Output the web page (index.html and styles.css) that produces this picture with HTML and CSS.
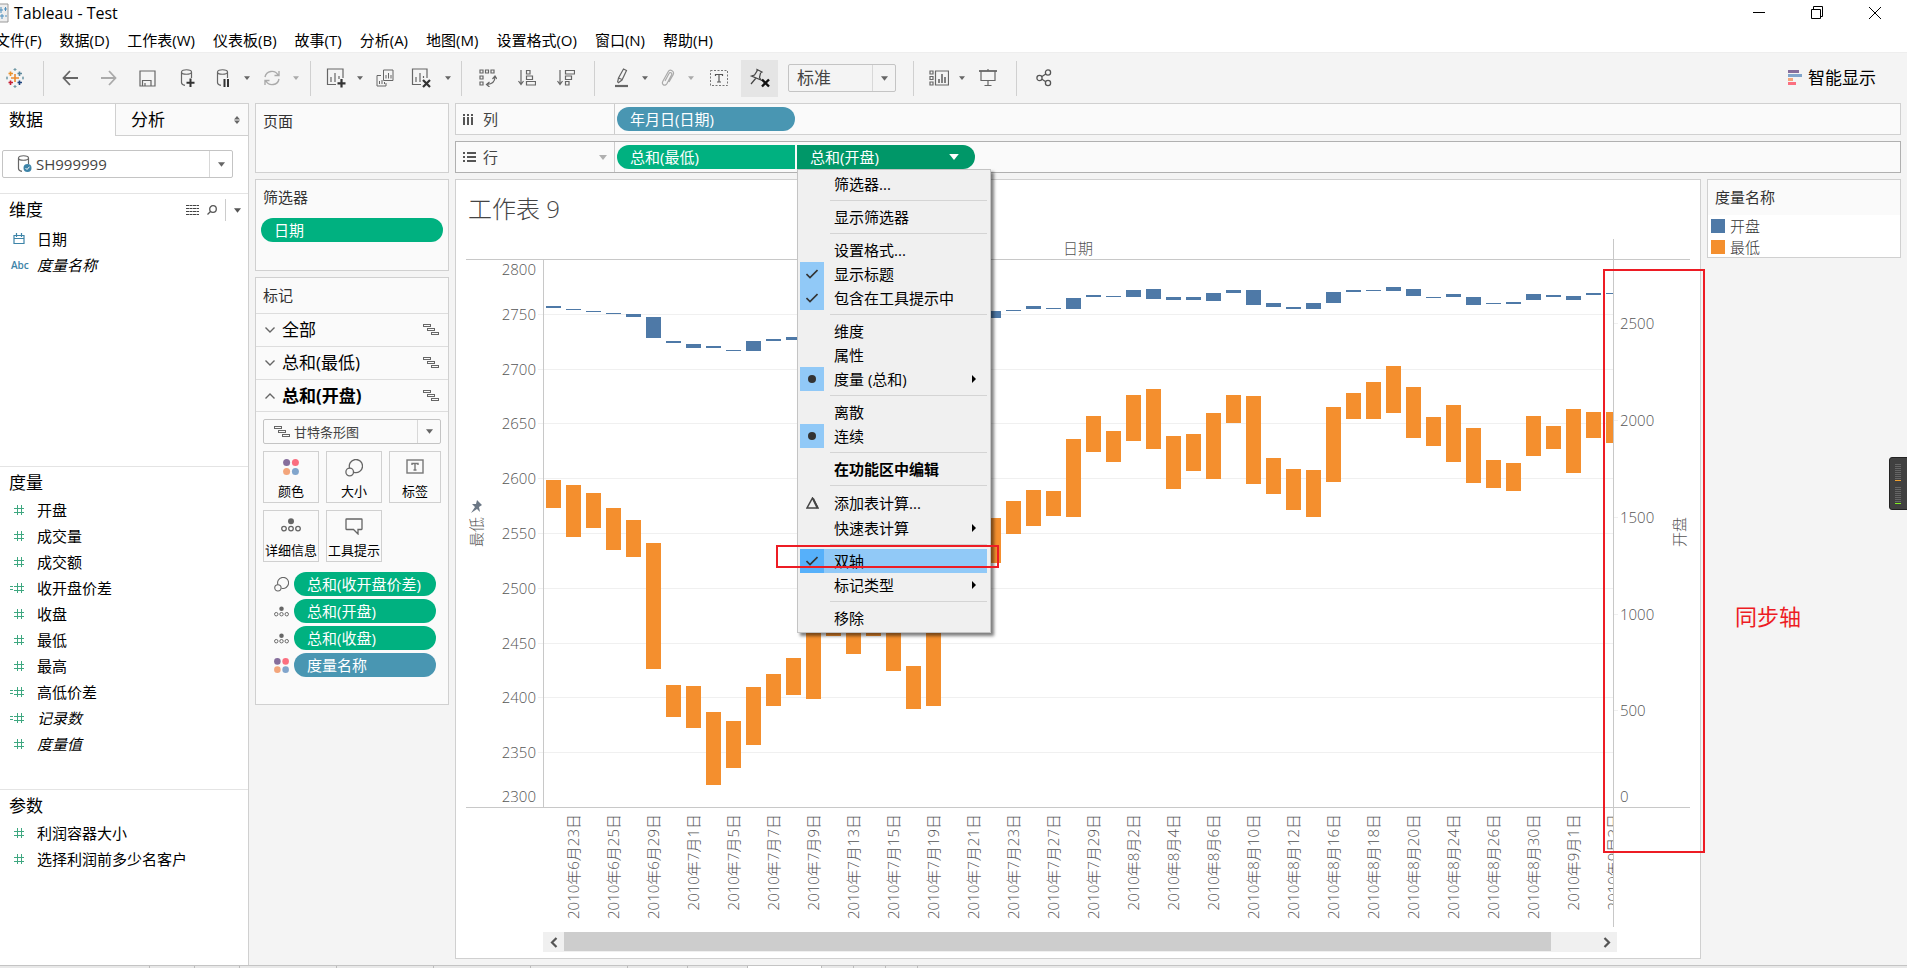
FILE: index.html
```html
<!DOCTYPE html>
<html lang="zh-CN">
<head>
<meta charset="utf-8">
<title>Tableau - Test</title>
<link rel="stylesheet" href="styles.css">
</head>
<body>
<svg class="defs" aria-hidden="true">
  <symbol id="caret" viewBox="0 0 8 5"><path d="M0 0H8L4 5Z" fill="currentColor"/></symbol>
  <symbol id="gantt" viewBox="0 0 16 12"><g fill="none" stroke="#666"><rect x=".5" y=".5" width="7" height="2"/><rect x="4.500" y="4.500" width="7" height="2"/><rect x="8.500" y="8.500" width="7" height="2"/></g></symbol>
  <symbol id="dots" viewBox="0 0 16 16"><circle cx="3.600" cy="3.600" r="3.500" fill="#866e9c"/><circle cx="12.400" cy="3.600" r="3.500" fill="#fb6f80"/><circle cx="3.600" cy="12.400" r="3.500" fill="#f3a57b"/><circle cx="12.400" cy="12.400" r="3.500" fill="#81a5cc"/></symbol>
  <symbol id="size" viewBox="0 0 18 18"><g fill="none" stroke="#666" stroke-width="1.300"><path d="M4.700 9.300A6.600 6.600 0 1 1 9 13.400"/><circle cx="4.700" cy="13" r="3.800"/></g></symbol>
  <symbol id="detail" viewBox="0 0 20 14"><circle cx="10" cy="3.200" r="3" fill="#666"/><g fill="none" stroke="#666" stroke-width="1.300"><circle cx="3" cy="10.600" r="2.300"/><circle cx="10" cy="10.600" r="2.300"/><circle cx="17" cy="10.600" r="2.300"/></g></symbol>
  <symbol id="hash" viewBox="0 0 16 12"><path d="M8.500 1V11M12.500 1V11M5 4.500H15M5 8.500H15" stroke="#3ea780" fill="none"/></symbol>
  <symbol id="calc" viewBox="0 0 16 12"><path d="M8.500 1V11M12.500 1V11M5 4.500H15M5 8.500H15M1 4.500H4M1 7.500H4" stroke="#3ea780" fill="none"/></symbol>
  <symbol id="check" viewBox="0 0 12 10"><path d="M.5 5L4 8.500L11.500 1" fill="none" stroke="#333" stroke-width="1.600"/></symbol>
  <symbol id="db" viewBox="0 0 16 20"><path d="M2.500 4V14.500C2.500 16 4 17 6 17.300M12.500 4V10M2.500 4C2.500 1 12.500 1 12.500 4S2.500 7 2.500 4" fill="none" stroke="#666" stroke-width="1.200"/></symbol>
</svg>

<header class="titlebar">
  <svg width="9" height="20" viewBox="0 0 9 20"><path d="M0 1H8V19H0" fill="#eee" stroke="#999"/><path d="M0 7H3M1 4V10M4 6H7M5.500 4V8M0 13H4M2 11V16M5 13H7" stroke="#4d8fbd" fill="none"/></svg>
  <span class="apptitle">Tableau - Test</span>
  <div class="wincontrols">
    <button aria-label="最小化"><svg width="12" height="12"><path d="M0 5.500H12" stroke="#000"/></svg></button>
    <button aria-label="还原"><svg width="12" height="13" fill="none" stroke="#000"><path d="M.5 3.500H9.500V12.500H.5ZM2.500 3V.5H11.500V10.500H10"/></svg></button>
    <button aria-label="关闭"><svg width="12" height="12"><path d="M0 0L12 12M12 0L0 12" stroke="#000"/></svg></button>
  </div>
</header>
<nav class="menubar">
  <button>文件(F)</button><button>数据(D)</button><button>工作表(W)</button><button>仪表板(B)</button><button>故事(T)</button><button>分析(A)</button><button>地图(M)</button><button>设置格式(O)</button><button>窗口(N)</button><button>帮助(H)</button>
</nav>

<div class="toolbar">
  <button class="b-29" aria-label="Tableau"><svg width="18" height="20" viewBox="0 0 18 20" fill="none" stroke-width="1.600"><path d="M9 6V14M5 10H13" stroke="#eb8a2f"/><path d="M4.500 3.500V8M2.500 5.500H7" stroke="#eb912c"/><path d="M13.500 3.500V8M11.500 5.500H16" stroke="#5b879b"/><path d="M4.500 12.500V17M2.500 14.500H7" stroke="#c72037"/><path d="M13.500 12.500V17M11.500 14.500H16" stroke="#1f447e"/><path d="M9 0V3M7.500 1.500H10.500M9 17V20M7.500 18.500H10.500M1 8.500V11.500M17 8.500V11.500M0 10H2M16 10H18" stroke="#7199a6" stroke-width="1.100"/></svg></button>
  <i class="sep s-logo"></i>
  <button class="b-39" aria-label="撤消"><svg width="16" height="16" fill="none" stroke="#666" stroke-width="1.800"><path d="M8 1L1.500 8L8 15M1.500 8H16"/></svg></button>
  <button class="b-39" aria-label="重做"><svg width="16" height="16" fill="none" stroke="#aaa" stroke-width="1.800"><path d="M8 1L14.500 8L8 15M14.500 8H0"/></svg></button>
  <button class="b-39" aria-label="保存"><svg width="17" height="17" fill="none" stroke="#666" stroke-width="1.200"><path d="M1 1H16V16H1ZM3.500 16V10.500H12V16M6 13V16"/></svg></button>
  <button class="b-39" aria-label="新建数据源"><svg width="16" height="20" viewBox="0 0 16 20"><use href="#db"/><path d="M11.500 10.500V19M7.500 14.700H15.500" stroke="#333" stroke-width="2"/></svg></button>
  <button class="b-33" aria-label="暂停自动更新"><svg width="16" height="20" viewBox="0 0 16 20"><use href="#db"/><path d="M9.500 11V19M13 11V19" stroke="#333" stroke-width="2"/></svg></button>
  <button class="b-16" aria-label="更多"><svg width="6" height="4"><use href="#caret"/></svg></button>
  <button class="b-33" aria-label="刷新"><svg width="18" height="18" fill="none" stroke="#aaa" stroke-width="1.400"><path d="M2 8A7 7 0 0 1 15 6M16 10A7 7 0 0 1 3 12M16 2V6.500H11.500M2 16V11.500H6.500"/></svg></button>
  <button class="b-16 dim" aria-label="更多"><svg width="6" height="4"><use href="#caret"/></svg></button>
  <i class="sep s-a"></i>
  <button class="b-33" aria-label="新建工作表"><svg width="20" height="20" fill="none" stroke="#666" stroke-width="1.200"><path d="M10 16.500H1.500V1H17V10M5 14V9M9 14V5M13 11V8" /><path d="M15.500 11V19.500M11.500 15.300H19.500" stroke="#333" stroke-width="2.200"/></svg></button>
  <button class="b-16" aria-label="更多"><svg width="6" height="4"><use href="#caret"/></svg></button>
  <button class="b-33" aria-label="复制"><svg width="18" height="18" fill="none" stroke="#666"><path d="M7.500 1H17V11.500H7.500ZM10 9.500V6M12.500 9.500V4M15 9.500V6M5 6.500H1V17H10V14M3.500 15V12M6 15V11M8.500 15V13"/></svg></button>
  <button class="b-39" aria-label="清除工作表"><svg width="20" height="20" fill="none" stroke="#666" stroke-width="1.200"><path d="M10 16.500H1.500V1H16V10M5 14V9M9 14V5M12.500 10V8"/><path d="M12 12L19 19M19 12L12 19" stroke="#333" stroke-width="2.200"/></svg></button>
  <button class="b-16" aria-label="更多"><svg width="6" height="4"><use href="#caret"/></svg></button>
  <i class="sep s-b"></i>
  <button class="b-39" aria-label="交换行和列"><svg width="18" height="18" fill="none" stroke="#666" stroke-width="1.200"><path d="M1 1H4V4H1ZM6.500 1H9.500V4H6.500ZM12 1H15V4H12ZM1 7H4V10H1ZM1 13H4V16H1ZM16 8C16 12 13 15 8 15.500M13.500 10L16 7L18 10M10.500 13L7.500 15.500L10.500 18"/></svg></button>
  <button class="b-39" aria-label="升序排序"><svg width="18" height="18" fill="none" stroke="#666" stroke-width="1.200"><path d="M3 1V15M.5 12L3 15.500L5.500 12M8.500 1.500H12V5H8.500ZM8.500 7H14.500V10.500H8.500ZM8.500 12.500H17.500V16H8.500Z"/></svg></button>
  <button class="b-39" aria-label="降序排序"><svg width="18" height="18" fill="none" stroke="#666" stroke-width="1.200"><path d="M3 1V15M.5 12L3 15.500L5.500 12M8.500 1.500H17.500V5H8.500ZM8.500 7H14.500V10.500H8.500ZM8.500 12.500H12V16H8.500Z"/></svg></button>
  <i class="sep s-c"></i>
  <button class="b-30" aria-label="突出显示"><svg width="14" height="20" fill="none" stroke="#666" stroke-width="1.200"><path d="M2.500 14.500L3.500 10L8.500 1L11.500 2.500L7 12L3 15M3.500 10L7 11.500"/><path d="M0 18H13" stroke-width="2.200"/></svg></button>
  <button class="b-16" aria-label="更多"><svg width="6" height="4"><use href="#caret"/></svg></button>
  <button class="b-30" aria-label="成员分组"><svg width="14" height="18" fill="none" stroke="#aaa" stroke-width="1.200"><path d="M4 12L8 4.500C9 2.500 11.500 4 10.500 6L6 14.500C4 18 0 15.500 2 12L7 3C9 -.5 14 2 12 6L8 13"/></svg></button>
  <button class="b-16 dim" aria-label="更多"><svg width="6" height="4"><use href="#caret"/></svg></button>
  <button class="b-39" aria-label="显示标记标签"><svg width="18" height="16" fill="none" stroke="#777"><rect x=".5" y=".5" width="17" height="15" stroke-dasharray="2 1.500"/><path d="M5.500 6V4.500H12.500V6M9 4.500V12M7 12H11" stroke="#555" stroke-width="1.200"/></svg></button>
  <button class="b-37 active" aria-label="固定"><svg width="22" height="20" fill="none" stroke="#444" stroke-width="1.200"><path d="M8 1.500L13 4L11.500 5L10.500 9.500L12 12L2.500 8L5.500 7L8 3ZM7 10L2 16"/><path d="M13 11.500L20 18.500M20 11.500L13 18.500" stroke="#111" stroke-width="2.400"/></svg></button>
  <span class="select fit"><select aria-label="适合"><option>标准</option></select><svg width="7" height="5"><use href="#caret"/></svg></span>
  <i class="sep s-d"></i>
  <button class="b-30" aria-label="显示/隐藏卡"><svg width="20" height="16" fill="none" stroke="#666" stroke-width="1.200"><path d="M1 1H4V4H1ZM1 6.500H4V9.500H1ZM1 12H4V15H1ZM6.500 1H19.500V15H6.500Z"/><path d="M10 13V9M13 13V4M16 13V7" stroke-width="1.600"/></svg></button>
  <button class="b-16" aria-label="更多"><svg width="6" height="4"><use href="#caret"/></svg></button>
  <button class="b-36" aria-label="演示模式"><svg width="18" height="18" fill="none" stroke="#666" stroke-width="1.200"><path d="M0 2H18" stroke-width="1.800"/><path d="M2 2V11.500H16V2M9 0V2M9 11.500V16.500M5.500 16.500H12.500"/></svg></button>
  <i class="sep s-e"></i>
  <button class="b-39" aria-label="共享"><svg width="16" height="18" fill="none" stroke="#555" stroke-width="1.300"><circle cx="3.500" cy="9" r="2.600"/><circle cx="12" cy="3.500" r="2.600"/><circle cx="12" cy="14" r="2.600"/><path d="M6 7.500L9.800 5M6 10.300L9.800 12.700"/></svg></button>
  <button class="showme"><svg width="14" height="17"><path d="M0 0H11V3H0Z" fill="#866e9c"/><path d="M0 4H14V7H0Z" fill="#81a5cc"/><path d="M0 8H5V11H0Z" fill="#f3a57b"/><path d="M0 12H8V15H0Z" fill="#fb6f80"/></svg>智能显示</button>
</div>

<main class="main">
  <aside class="datapane">
    <div class="tabs"><button class="tab on">数据</button><button class="tab">分析<svg width="6" height="8"><path d="M3 0L6 3.500H0ZM3 8L0 4.500H6Z" fill="#666"/></svg></button></div>
    <div class="source"><span class="select ds"><svg class="lead" width="16" height="20" viewBox="0 0 16 20"><use href="#db"/><circle cx="11.500" cy="14" r="4" fill="#3d84a8"/><path d="M9.500 14L11 15.500L13.500 12.700" stroke="#fff" fill="none"/></svg><select aria-label="数据源"><option>SH999999</option></select><svg width="7" height="5"><use href="#caret"/></svg></span></div>
    <section class="group dims">
      <h2>维度<span class="tools"><svg width="13" height="10"><path d="M0 .5H13M0 3.500H13M0 6.500H13M0 9.500H13" stroke="#444" stroke-dasharray="3 .5"/></svg><svg width="10" height="10" fill="none" stroke="#555" stroke-width="1.300"><circle cx="6" cy="4" r="3.300"/><path d="M3.500 6.500L.5 9.500"/></svg><i></i><svg width="7" height="5"><use href="#caret"/></svg></span></h2>
      <ul class="fields">
        <li><svg width="12" height="12" fill="none" stroke="#3d84a8" stroke-width="1.200"><path d="M1 2.500H11V10.500H1ZM1 5.500H11M3.500 0V4M8.500 0V4"/></svg>日期</li>
        <li><b class="abc">Abc</b><em>度量名称</em></li>
      </ul>
    </section>
    <section class="group meas">
      <h2>度量</h2>
      <ul class="fields">
        <li><svg width="16" height="12"><use href="#hash"/></svg>开盘</li>
        <li><svg width="16" height="12"><use href="#hash"/></svg>成交量</li>
        <li><svg width="16" height="12"><use href="#hash"/></svg>成交额</li>
        <li><svg width="16" height="12"><use href="#calc"/></svg>收开盘价差</li>
        <li><svg width="16" height="12"><use href="#hash"/></svg>收盘</li>
        <li><svg width="16" height="12"><use href="#hash"/></svg>最低</li>
        <li><svg width="16" height="12"><use href="#hash"/></svg>最高</li>
        <li><svg width="16" height="12"><use href="#calc"/></svg>高低价差</li>
        <li><svg width="16" height="12"><use href="#calc"/></svg><em>记录数</em></li>
        <li><svg width="16" height="12"><use href="#hash"/></svg><em>度量值</em></li>
      </ul>
    </section>
    <section class="group params">
      <h2>参数</h2>
      <ul class="fields">
        <li><svg width="16" height="12"><use href="#hash"/></svg>利润容器大小</li>
        <li><svg width="16" height="12"><use href="#hash"/></svg>选择利润前多少名客户</li>
      </ul>
    </section>
  </aside>

  <div class="cards">
    <section class="card pages"><h3>页面</h3></section>
    <section class="card filters"><h3>筛选器</h3><button class="pill">日期</button></section>
    <section class="card marks">
      <h3>标记</h3>
      <button class="layer"><svg width="10" height="6"><path d="M.5 .5L5 5L9.500 .5" fill="none" stroke="#666" stroke-width="1.400"/></svg>全部<svg class="end" width="16" height="12"><use href="#gantt"/></svg></button>
      <button class="layer"><svg width="10" height="6"><path d="M.5 .5L5 5L9.500 .5" fill="none" stroke="#666" stroke-width="1.400"/></svg>总和(最低)<svg class="end" width="16" height="12"><use href="#gantt"/></svg></button>
      <button class="layer open"><svg width="10" height="6"><path d="M.5 5.500L5 1L9.500 5.500" fill="none" stroke="#666" stroke-width="1.400"/></svg>总和(开盘)<svg class="end" width="16" height="12"><use href="#gantt"/></svg></button>
      <span class="select mark"><svg class="lead" width="16" height="12"><use href="#gantt"/></svg><select aria-label="标记类型"><option>甘特条形图</option></select><svg width="7" height="5"><use href="#caret"/></svg></span>
      <div class="encodings">
        <button><svg width="16" height="16"><use href="#dots"/></svg>颜色</button>
        <button><svg width="18" height="18"><use href="#size"/></svg>大小</button>
        <button><svg width="18" height="16" fill="none" stroke="#777" stroke-width="1.400"><rect x="1" y="1" width="16" height="13"/><path d="M6 6V4.500H12V6M9 4.500V11M7.500 11H10.500"/></svg>标签</button>
        <button><svg width="20" height="14"><use href="#detail"/></svg>详细信息</button>
        <button><svg width="18" height="17" fill="none" stroke="#666" stroke-width="1.300"><path d="M1.500 1H16.500Q17 1 17 1.500V11Q17 11.500 16.500 11.500H13V16L8.500 11.500H1.500Q1 11.500 1 11V1.500Q1 1 1.500 1Z"/></svg>工具提示</button>
      </div>
      <ul class="pills">
        <li><svg width="15" height="15"><use href="#size"/></svg><button class="pill">总和(收开盘价差)</button></li>
        <li><svg width="15" height="11"><use href="#detail"/></svg><button class="pill">总和(开盘)</button></li>
        <li><svg width="15" height="11"><use href="#detail"/></svg><button class="pill">总和(收盘)</button></li>
        <li><svg width="15" height="15"><use href="#dots"/></svg><button class="pill blue">度量名称</button></li>
      </ul>
    </section>
  </div>

  <div class="work">
    <div class="shelf">
      <div class="shelfname"><svg width="11" height="11" fill="#555"><path d="M0 0H2V2H0ZM4 0H6V2H4ZM8 0H10V2H8ZM0 3H2V11H0ZM4 3H6V11H4ZM8 3H10V11H8Z"/></svg>列</div>
      <button class="pill blue wide">年月日(日期)</button>
    </div>
    <div class="shelf rows">
      <div class="shelfname"><svg width="13" height="11" fill="#555"><path d="M0 0H2V2H0ZM0 4H2V6H0ZM0 8H2V10H0ZM4 0H13V2H4ZM4 4H13V6H4ZM4 8H13V10H4Z"/></svg>行<svg class="end" width="8" height="5"><use href="#caret"/></svg></div>
      <button class="pill wide flatright">总和(最低)</button>
      <div class="pillbox">
        <button class="pill wide flatleft current">总和(开盘)<svg width="10" height="6"><use href="#caret"/></svg></button>
        <div class="menu" role="menu">
          <button role="menuitem">筛选器...</button><hr>
          <button role="menuitem">显示筛选器</button><hr>
          <button role="menuitem">设置格式...</button>
          <button role="menuitem"><span class="mk on"><svg width="12" height="10"><use href="#check"/></svg></span>显示标题</button>
          <button role="menuitem"><span class="mk on"><svg width="12" height="10"><use href="#check"/></svg></span>包含在工具提示中</button><hr>
          <button role="menuitem">维度</button>
          <button role="menuitem">属性</button>
          <button role="menuitem"><span class="mk on"><svg width="8" height="8"><circle cx="4" cy="4" r="4" fill="#333"/></svg></span>度量 (总和)<svg class="sub" width="4" height="8"><path d="M0 0L4 4L0 8Z"/></svg></button><hr>
          <button role="menuitem">离散</button>
          <button role="menuitem"><span class="mk on"><svg width="8" height="8"><circle cx="4" cy="4" r="4" fill="#333"/></svg></span>连续</button><hr>
          <button role="menuitem" class="strong">在功能区中编辑</button><hr>
          <button role="menuitem" class="tall"><span class="mk"><svg width="13" height="12" fill="none" stroke="#444"><path d="M1 11H12L6.500 1Z" stroke-width="1.500"/><path d="M7 1.500L11.500 11" stroke-width="2"/></svg></span>添加表计算...</button>
          <button role="menuitem" class="tall">快速表计算<svg class="sub" width="4" height="8"><path d="M0 0L4 4L0 8Z"/></svg></button><hr>
          <button role="menuitem" class="hover"><span class="mk on"><svg width="12" height="10"><use href="#check"/></svg></span>双轴<span class="redbox"></span></button>
          <button role="menuitem">标记类型<svg class="sub" width="4" height="8"><path d="M0 0L4 4L0 8Z"/></svg></button><hr>
          <button role="menuitem">移除</button>
        </div>
      </div>
    </div>
    <div class="stage">
      <section class="viz">
        <h1>工作表 9</h1>
        <div class="chart">
          <svg class="axis" id="left"></svg>
          <svg class="plot" id="plot"></svg>
          <svg class="axis" id="right"></svg>
        </div>
        <div class="scroll">
          <button aria-label="向左"><svg width="8" height="11"><path d="M6.500 1L2 5.500L6.500 10" fill="none" stroke="#555" stroke-width="2.200"/></svg></button>
          <div class="track"><div class="thumb"></div></div>
          <button aria-label="向右"><svg width="8" height="11"><path d="M1.500 1L6 5.500L1.500 10" fill="none" stroke="#555" stroke-width="2.200"/></svg></button>
        </div>
        <span class="axisbox"></span>
      </section>
      <aside class="side">
        <section class="legend">
          <h3>度量名称</h3>
          <ul><li><i class="c-blue"></i>开盘</li><li><i class="c-orange"></i>最低</li></ul>
        </section>
        <p class="note">同步轴</p>
      </aside>
    </div>
  </div>
</main>
<footer class="sheets"><i></i><i></i><i></i><i></i><i></i><i></i><i></i><i></i><i></i><i class="on"></i><i></i><i></i><i></i></footer>
<svg class="meter" width="18" height="53"><path d="M18 .5H3Q.5 .5 .5 3V50Q.5 52.500 3 52.500H18" fill="#404040" stroke="#222"/><path d="M6 7.500H12M6 9.500H12M6 11.500H12M6 13.500H12M6 15.500H12M6 17.500H12M6 19.500H12M6 21.500H12M6 30.500H12M6 32.500H12M6 34.500H12M6 36.500H12M6 38.500H12M6 40.500H12M6 42.500H12M6 44.500H12" stroke="#666"/><path d="M6 23.500H12" stroke="#f0a030"/><path d="M6 46.500H12" stroke="#80f020"/></svg>
<script src="chart.js"></script>
</body>
</html>
```

FILE: styles.css
```css
* { box-sizing: border-box; }
body {
  margin: 0;
  min-height: 100vh;
  display: flex;
  flex-direction: column;
  position: relative;
  overflow-x: hidden;
  background: #f4f4f4;
  color: #000;
  font: 15px/20px "Open Sans", "Noto Sans CJK SC", sans-serif;
}
button, select { font: inherit; color: inherit; background: none; border: 0; padding: 0; margin: 0; }
button { display: flex; align-items: center; white-space: nowrap; }
svg { display: block; flex: none; }
ul { list-style: none; margin: 0; padding: 0; }
h1, h2, h3, p { margin: 0; font-weight: 400; }
h3 { font-size: 15px; }
.defs { position: absolute; width: 0; height: 0; }

.titlebar { display: flex; align-items: center; height: 25px; background: #fff; }
.apptitle { margin-left: 5px; font-size: 16px; }
.wincontrols { display: flex; margin-left: auto; padding-right: 3px; }
.wincontrols button { width: 58px; height: 24px; justify-content: center; }
.menubar { display: flex; gap: 18px; height: 27px; padding-top: 3px; margin-left: -5px; background: #fff; }
.menubar button { height: 24px; }

.toolbar { display: flex; align-items: center; height: 51px; padding-right: 31px; color: #666; border-top: 1px solid #eee; }
.toolbar button { height: 37px; justify-content: center; flex: none; }
.b-16 { width: 16px; }
.b-29 { width: 29px; }
.b-30 { width: 30px; }
.b-33 { width: 33px; }
.b-36 { width: 36px; }
.b-37 { width: 37px; }
.b-39 { width: 39px; }
.dim { color: #aaa; }
.active { margin-left: 3px; background: #e5e5e5; }
.sep { width: 1px; height: 35px; background: #d0d0d0; }
.s-logo { margin: 0 6px 0 14px; }
.s-a { margin: 0 8px 0 6px; }
.s-b { margin: 0 6px 0 5px; }
.s-c { margin: 0 12px 0 9px; }
.s-d { margin: 0 10px 0 17px; }
.s-e { margin: 0 7px 0 10px; }
.toolbar .showme { margin-left: auto; gap: 6px; font-size: 17px; color: #000; }

.select { position: relative; display: flex; align-items: center; border: 1px solid #c4c4c4; border-radius: 2px; color: #444; }
.select select { appearance: none; flex: 1; height: 100%; min-width: 0; outline: 0; }
.select > svg:last-child { position: absolute; right: 7px; color: #666; pointer-events: none; }
.select::after { content: ""; position: absolute; right: 22px; top: 0; bottom: 0; border-left: 1px solid #d8d8d8; }
.fit { width: 108px; height: 28px; margin-left: 10px; padding-left: 8px; font-size: 17px; }

.main { flex: 1; display: flex; gap: 6px; padding-right: 6px; }

.datapane { width: 249px; flex: none; background: #fff; border: 1px solid #d0d0d0; border-width: 1px 1px 0 0; }
.tabs { display: flex; height: 32px; font-size: 17px; }
.tab { padding-left: 9px; width: 115px; }
.tab + .tab { flex: 1; justify-content: space-between; padding: 0 8px 0 15px; background: #fafafa; border: 1px solid #d0d0d0; border-width: 0 0 1px 1px; }
.source { height: 57px; padding: 14px 15px 0 2px; }
.ds { height: 28px; padding-left: 13px; gap: 4px; }
.group { border-top: 1px solid #e4e4e4; padding-top: 3px; }
.group h2 { display: flex; align-items: center; padding-left: 9px; height: 26px; font-size: 17px; }
.dims { height: 273px; }
.meas { height: 323px; }
.dims .fields { padding-top: 3px; }
.fields li { display: flex; align-items: center; height: 26px; padding-left: 37px; position: relative; }
.meas .fields, .params .fields { padding-top: 1px; }
.fields svg, .abc { position: absolute; left: 9px; }
.dims .fields svg { left: 13px; }
.abc { left: 11px; font-size: 10px; color: #3d84a8; font-weight: 600; }
.tools { display: flex; align-items: center; gap: 8px; margin-left: auto; padding-right: 7px; color: #555; }
.tools i { width: 1px; height: 22px; background: #ccc; }

.cards { width: 194px; flex: none; display: flex; flex-direction: column; gap: 6px; color: #333; }
.card { border: 1px solid #d0d0d0; background: #fafafa; }
.card h3 { padding: 7px 7px 0; }
.pages { height: 70px; }
.filters { height: 92px; }
.filters .pill { width: 182px; margin: 11px 0 0 5px; }
.marks { height: 428px; }
.marks h3 { height: 35px; }
.pill { height: 24px; padding: 0 13px; border-radius: 12px; background: #00b180; color: #fff; }
.pill.blue { background: #4996b2; }
.layer { width: 100%; height: 33px; padding: 0 9px; gap: 7px; border-top: 1px solid #ddd; font-size: 17px; color: #000; }
.layer.open { font-weight: 700; border-bottom: 1px solid #ddd; }
.end { margin-left: auto; }
.mark { height: 25px; margin: 7px; padding-left: 10px; gap: 4px; font-size: 13px; }
.encodings { display: grid; grid-template-columns: 56px 56px 52px; gap: 7px; padding: 0 7px; font-size: 13px; color: #000; }
.encodings button { height: 52px; padding: 7px 0 1px; flex-direction: column; justify-content: space-between; border: 1px solid #d0d0d0; }
.pills { padding: 10px 12px 0 18px; display: grid; gap: 3px; }
.pills li { display: flex; align-items: center; gap: 5px; }
.pills .pill { flex: 1; }

.work { flex: 1; min-width: 0; display: flex; flex-direction: column; gap: 6px; }
.shelf { display: flex; align-items: center; height: 32px; border: 1px solid #d0d0d0; background: #fafafa; }
.shelf.rows { border-color: #b0b0b0; }
.shelfname { display: flex; align-items: center; gap: 7px; width: 159px; height: 100%; padding: 0 7px; margin-right: 2px; border-right: 1px solid #ccc; color: #444; }
.shelfname svg:first-child { width: 13px; }
.shelfname .end { color: #b0b0b0; }
.wide { width: 178px; padding: 0 16px 0 13px; }
.flatright { border-radius: 12px 0 0 12px; }
.flatleft { border-radius: 0 12px 12px 0; justify-content: space-between; }
.current { background: #009768; }
.pillbox { position: relative; margin-left: 2px; }

.menu { position: absolute; z-index: 5; left: 0; top: 100%; width: 194px; padding: 2px 3px 2px 2px; background: #f0f0f0; border: 1px solid #c4c4c4; box-shadow: 3px 3px 3px rgba(0, 0, 0, .5); }
.menu button { position: relative; width: 100%; height: 24px; padding-left: 34px; }
.menu .tall { height: 25px; }
.menu hr { height: 1px; margin: 4px 0 4px 30px; border: 0; background: #d4d4d4; }
.menu .strong { font-weight: 700; }
.mk { position: absolute; left: 0; top: 0; width: 24px; height: 100%; display: flex; align-items: center; justify-content: center; }
.mk.on, .menu .hover { background: #91c9f7; }
.hover .mk.on { background: #56b0fa; }
.sub { position: absolute; right: 11px; }
.redbox { position: absolute; left: -24px; top: -4px; width: 223px; height: 23px; border: 2px solid #ed1c24; }

.stage { flex: 1; display: flex; gap: 6px; margin-bottom: 6px; }
.viz { position: relative; flex: 1; min-width: 0; padding: 0 10px; background: #fff; border: 1px solid #d0d0d0; }
.viz h1 { height: 59px; padding: 12px 0 0 2px; font-size: 24px; line-height: 34px; font-weight: 300; color: #444; }
.chart { display: flex; height: 688px; }
.axis { width: 77px; height: 100%; }
.plot { flex: 1; min-width: 0; height: 100%; overflow: hidden; }
.chart text { font-size: 15px; font-weight: 300; fill: #555; }
.scroll { display: flex; height: 20px; margin: 5px 73px 0 77px; background: #f0f0f0; }
.scroll button { width: 21px; justify-content: center; }
.track { flex: 1; }
.thumb { width: calc(100% - 45px); height: 19px; background: #cdcdcd; }
.axisbox { position: absolute; right: -5px; top: 89px; width: 102px; height: 584px; border: 2px solid #ed1c24; }
.side { width: 194px; flex: none; }
.legend { height: 79px; border: 1px solid #d0d0d0; background: #fff; color: #333; }
.legend h3 { height: 35px; padding: 7px; background: #fafafa; }
.legend li { display: flex; align-items: center; gap: 5px; height: 21px; padding-left: 3px; font-weight: 300; }
.legend i { width: 14px; height: 14px; }
.c-blue { background: #4e79a7; }
.c-orange { background: #f48f2e; }
.note { margin: 341px 0 0 28px; font-size: 22px; line-height: 34px; color: #ed1c24; }

.sheets { display: flex; height: 3px; background: #e8e8e8; border-top: 1px solid #c4c4c4; }
.sheets i { width: 45px; border-right: 1px solid #bbb; }
.sheets i:first-child { width: 150px; }
.sheets i:nth-child(n+4) { width: 97px; }
.sheets i:nth-child(n+8) { width: 60px; }
.sheets i:nth-child(n+11) { width: 32px; }
.sheets .on:nth-child(10) { width: 74px; background: #fff; }
.meter { position: absolute; right: 0; top: 457px; }
```

FILE: chart.js
```js
const NS = 'http://www.w3.org/2000/svg';
const TOP = 239, BASE = 807, HEAD = 259, STEP = 20, BAR = 15;

function add(parent, name, attrs, text) {
  const el = document.createElementNS(NS, name);
  for (const key in attrs) el.setAttribute(key, attrs[key]);
  if (text !== undefined) el.textContent = text;
  parent.appendChild(el);
  return el;
}
function line(svg, x, y, w, h, fill) {
  add(svg, 'rect', { x, y: y - TOP, width: w, height: h, fill });
}

// [top, bottom] of each day's bar
const low = [
  [480,508],[485,537],[493,528],[508,550],[520,557],[543,669],[685,717],[686,728],[712,785],[721,768],
  [687,745],[674,706],[658,695],[600,699],[590,636],[585,654],[580,636],[590,671],[666,709],[600,706],
  [560,610],[540,600],[518,563],[501,534],[490,526],[491,516],[439,517],[416,452],[431,462],[395,441],
  [389,449],[436,489],[434,471],[413,479],[395,423],[396,484],[458,494],[469,510],[470,517],[407,482],
  [393,419],[382,419],[366,413],[387,438],[417,446],[405,462],[428,483],[460,488],[463,491],[416,456],
  [426,449],[409,473],[412,438],[412,443]
];
const open = [
  [306,308],[309,310],[311,312],[313,314],[314,317],[317,338],[341,343],[344,348],[346,348],[350,351],
  [341,351],[339,341],[337,340],[335,338],[333,336],[331,335],[330,332],[328,331],[326,329],[322,327],
  [318,323],[314,319],[311,318],[310,311],[306,309],[308,309],[298,309],[295,297],[296,297],[290,297],
  [289,299],[297,300],[297,300],[293,301],[290,293],[290,305],[303,307],[307,309],[303,309],[292,303],
  [290,292],[290,291],[287,291],[289,296],[297,298],[294,297],[297,305],[303,304],[302,304],[294,300],
  [295,297],[296,300],[293,295],[293,294]
];
const days = ['6-23','6-25','6-29','7-1','7-5','7-7','7-9','7-13','7-15','7-19','7-21','7-23','7-27','7-29',
  '8-2','8-4','8-6','8-10','8-12','8-16','8-18','8-20','8-24','8-26','8-30','9-1','9-3'];
const grid = [314, 369, 423, 478, 533, 588, 643, 697, 752];

const left = document.getElementById('left');
line(left, 0, HEAD, 77, 1, '#c8c8c8');
line(left, 0, BASE, 77, 1, '#c8c8c8');
[269, ...grid, 796].forEach((y, i) =>
  add(left, 'text', { x: 70, y: y - TOP + 6, 'text-anchor': 'end' }, 2800 - i * 50));
grid.forEach(y => line(left, 72, y, 5, 1, '#f0f0f0'));
add(left, 'text', { transform: 'translate(16 293) rotate(-90)', 'text-anchor': 'middle' }, '最低');
add(left, 'path', { d: 'M7 261L12 266L9 268L10 273L7 270L1 274L5 268L2 265L6 265Z', fill: '#6b7785', transform: 'translate(4 0)' });

const plot = document.getElementById('plot');
grid.forEach(y => line(plot, 0, y, '100%', 1, '#f0f0f0'));
open.forEach(([a, b], i) => line(plot, 3 + i * STEP, a, BAR, b - a, '#4e79a7'));
low.forEach(([a, b], i) => line(plot, 3 + i * STEP, a, BAR, b - a, '#f48f2e'));
line(plot, 0, HEAD, '100%', 1, '#c8c8c8');
line(plot, 0, BASE, '100%', 1, '#c8c8c8');
line(plot, 0, HEAD, 1, BASE - HEAD, '#c8c8c8');
add(plot, 'text', { x: '50%', y: 15, 'text-anchor': 'middle' }, '日期');
days.forEach((day, i) => {
  const [m, d] = day.split('-');
  add(plot, 'text', { transform: `translate(${36 + i * 40} 575) rotate(-90)`, 'text-anchor': 'end' }, `2010年${m}月${d}日`);
});

const right = document.getElementById('right');
line(right, 0, 239, 1, 688, '#c8c8c8');
line(right, 0, HEAD, 77, 1, '#c8c8c8');
line(right, 0, BASE, 77, 1, '#c8c8c8');
[323, 420, 517, 614, 710, 796].forEach((y, i) => {
  add(right, 'text', { x: 7, y: y - TOP + 6 }, 2500 - i * 500);
  if (i < 5) line(right, 1, y, 4, 1, '#f0f0f0');
});
add(right, 'text', { transform: 'translate(72 293) rotate(-90)', 'text-anchor': 'middle' }, '开盘');
```
